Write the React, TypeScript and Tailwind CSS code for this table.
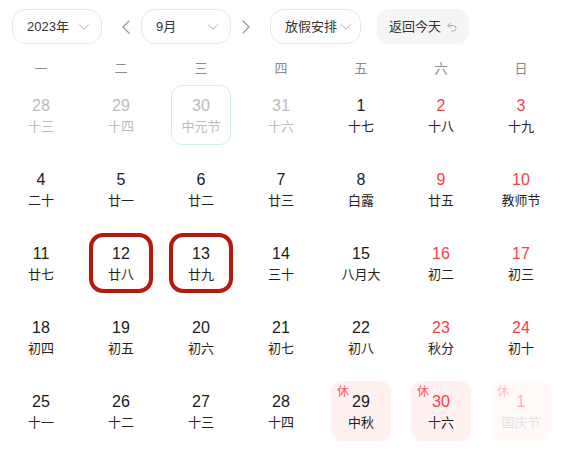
import React from "react";
import { ChevronDown, ChevronLeft, ChevronRight, Undo2 } from "lucide-react";

type Day = {
  d: number;
  l: string;
  red?: boolean;
  other?: boolean;
  green?: boolean;
  rest?: boolean;
  mark?: boolean;
};

const rows: Day[][] = [
  [
    { d: 28, l: "十三", other: true },
    { d: 29, l: "十四", other: true },
    { d: 30, l: "中元节", other: true, green: true },
    { d: 31, l: "十六", other: true },
    { d: 1, l: "十七" },
    { d: 2, l: "十八", red: true },
    { d: 3, l: "十九", red: true },
  ],
  [
    { d: 4, l: "二十" },
    { d: 5, l: "廿一" },
    { d: 6, l: "廿二" },
    { d: 7, l: "廿三" },
    { d: 8, l: "白露" },
    { d: 9, l: "廿五", red: true },
    { d: 10, l: "教师节", red: true },
  ],
  [
    { d: 11, l: "廿七" },
    { d: 12, l: "廿八", mark: true },
    { d: 13, l: "廿九", mark: true },
    { d: 14, l: "三十" },
    { d: 15, l: "八月大" },
    { d: 16, l: "初二", red: true },
    { d: 17, l: "初三", red: true },
  ],
  [
    { d: 18, l: "初四" },
    { d: 19, l: "初五" },
    { d: 20, l: "初六" },
    { d: 21, l: "初七" },
    { d: 22, l: "初八" },
    { d: 23, l: "秋分", red: true },
    { d: 24, l: "初十", red: true },
  ],
  [
    { d: 25, l: "十一" },
    { d: 26, l: "十二" },
    { d: 27, l: "十三" },
    { d: 28, l: "十四" },
    { d: 29, l: "中秋", rest: true },
    { d: 30, l: "十六", rest: true, red: true },
    { d: 1, l: "国庆节", rest: true, red: true, other: true },
  ],
];

const weekdays = ["一", "二", "三", "四", "五", "六", "日"];

function Cell({ day }: { day: Day }) {
  const numColor = day.other
    ? day.red
      ? "text-[#ff3b45]"
      : "text-[#bbbbbb]"
    : day.red
    ? "text-[#ff3b45]"
    : "text-[#1a1a1a]";
  const lunarColor = day.other ? "text-[#bbbbbb]" : "text-[#222222]";
  const bg = day.rest ? "bg-[#fff1f0]" : "";
  const border = day.green ? "border-[1.5px] border-[#d3f1e2]" : "";
  const fade = day.rest && day.other ? "opacity-40" : "";
  return (
    <div className="flex justify-center">
      <div
        className={`relative w-[60px] h-[60px] rounded-[11px] flex flex-col items-center justify-center gap-[3px] ${bg} ${border} ${fade}`}
      >
        {day.rest && (
          <span className="absolute left-[6px] top-[3px] text-[12px] leading-[16px] text-[#ff5c5c]">
            休
          </span>
        )}
        <span className={`text-[16px] leading-[20px] ${numColor}`}>{day.d}</span>
        <span className={`text-[13px] leading-[16px] whitespace-nowrap ${lunarColor}`}>{day.l}</span>
        {day.mark && (
          <div className="absolute -inset-x-[2px] inset-y-0 border-4 border-[#b8180e] rounded-[14px]" />
        )}
      </div>
    </div>
  );
}

export default function App() {
  return (
    <div
      className="w-[565px] h-[450px] bg-white overflow-hidden"
      style={{ fontFamily: '"Liberation Sans", "Noto Sans CJK SC", sans-serif' }}
    >
      <div className="flex items-center pt-[9px] pl-[12px]">
        <div className="shrink-0 w-[90px] h-[35px] rounded-[14px] border border-[#e8e8e8] flex items-center justify-between pl-[14px] pr-[8px] text-[13px] text-[#333] whitespace-nowrap">
          <span>2023年</span>
          <ChevronDown size={18} strokeWidth={1.3} className="shrink-0 text-[#aaa]" />
        </div>
        <button className="shrink-0 ml-[12px] w-[24px] h-[24px] flex items-center justify-center text-[#999]">
          <ChevronLeft size={24} strokeWidth={1.3} />
        </button>
        <div className="shrink-0 ml-[3px] w-[90px] h-[35px] rounded-[14px] border border-[#e8e8e8] flex items-center justify-between pl-[14px] pr-[8px] text-[13px] text-[#333] whitespace-nowrap">
          <span>9月</span>
          <ChevronDown size={18} strokeWidth={1.3} className="shrink-0 text-[#aaa]" />
        </div>
        <button className="shrink-0 ml-[3px] w-[24px] h-[24px] flex items-center justify-center text-[#999]">
          <ChevronRight size={24} strokeWidth={1.3} />
        </button>
        <div className="shrink-0 ml-[12px] w-[91px] h-[35px] rounded-[14px] border border-[#e8e8e8] flex items-center pl-[14px] text-[13px] text-[#333] whitespace-nowrap">
          <span>放假安排</span>
          <ChevronDown size={18} strokeWidth={1.3} className="shrink-0 text-[#aaa]" />
        </div>
        <div className="shrink-0 ml-[16px] w-[92px] h-[35px] rounded-[12px] bg-[#f5f5f5] flex items-center pl-[12px] gap-[5px] text-[13px] text-[#333] whitespace-nowrap">
          <span>返回今天</span>
          <Undo2 size={12} strokeWidth={1.6} className="shrink-0 text-[#999]" />
        </div>
      </div>
      <div className="mt-[11px] h-[27px] w-[560px] ml-[1px] grid grid-cols-7 items-center">
        {weekdays.map((w) => (
          <div key={w} className="text-center text-[13px] text-[#8a8a8a]">
            {w}
          </div>
        ))}
      </div>
      <div className="mt-[3px] w-[560px] ml-[1px] grid grid-cols-7 gap-y-[14px]">
        {rows.flat().map((d, i) => (
          <Cell key={i} day={d} />
        ))}
      </div>
    </div>
  );
}
